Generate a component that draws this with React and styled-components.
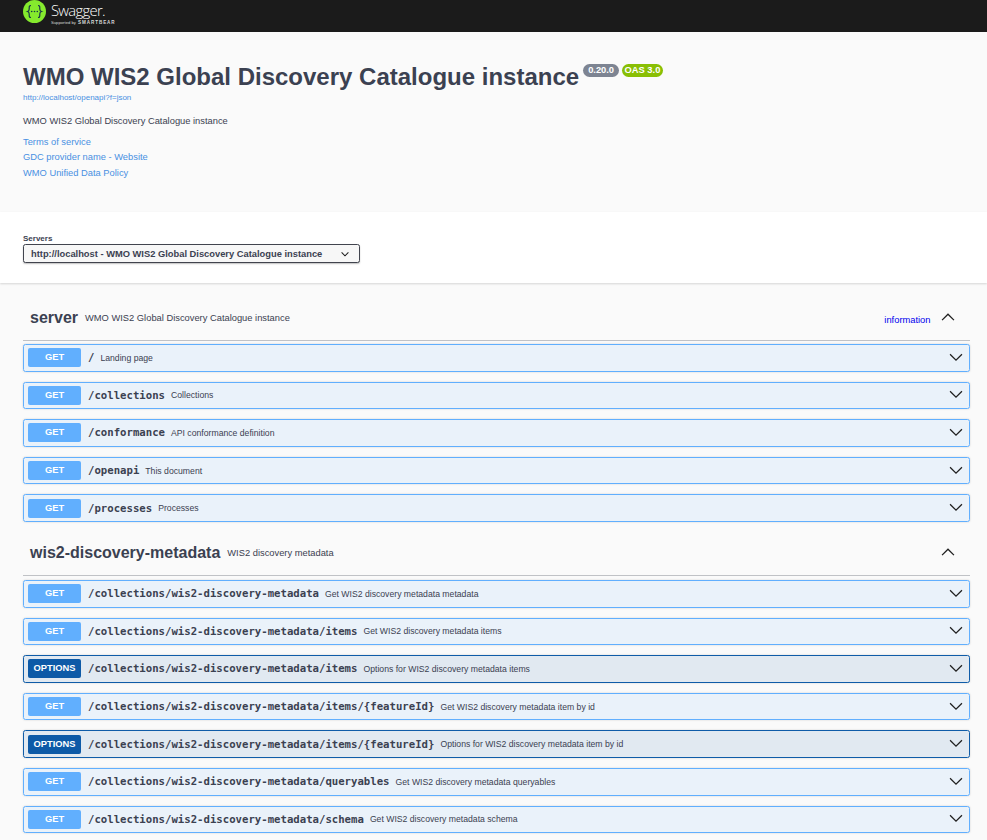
import React from 'react'
import styled, { createGlobalStyle } from 'styled-components'

const GlobalStyle = createGlobalStyle`
  html, body {
    margin: 0;
    padding: 0;
    background: #fafafa;
    font-family: "Liberation Sans", Arial, sans-serif;
    color: #3b4151;
  }
`

const Page = styled.div`
  width: 987px;
  height: 840px;
  overflow: hidden;
  background: #fafafa;
`

const Topbar = styled.div`
  height: 32px;
  background: #1b1b1b;
  padding-left: 23px;
  display: flex;
  align-items: flex-start;
  gap: 5px;
  svg {
    margin-top: -0.5px;
  }
`

const LogoText = styled.div`
  display: flex;
  flex-direction: column;
  color: #fff;
  margin-top: 2px;
`

const LogoName = styled.div`
  font-family: "Open Sans", sans-serif;
  font-size: 14.8px;
  line-height: 17px;
  letter-spacing: -0.7px;
  font-weight: 300;
`

const LogoSub = styled.div`
  font-size: 4.2px;
  line-height: 6px;
  margin-top: 1px;
  color: #d8d8d8;
  span {
    font-size: 4.6px;
    font-weight: 700;
    letter-spacing: 0.9px;
    margin-left: 1px;
  }
`

const Info = styled.div`
  height: 180px;
  padding: 29px 23px 0;
  box-sizing: border-box;
  background: #fafafa;
`

const TitleRow = styled.div`
  display: flex;
  align-items: flex-start;
`

const Title = styled.h1`
  margin: 0;
  font-size: 24px;
  line-height: 31px;
  font-weight: 700;
  color: #3b4151;
`

const Badge = styled.span`
  margin-left: ${p => p.$ml};
  margin-top: 3px;
  height: 13px;
  line-height: 13px;
  padding: 0 ${p => p.$pad};
  border-radius: 7px;
  background: ${p => p.$bg};
  color: #fff;
  font-size: 9.33px;
  font-weight: 700;
`

const SpecLink = styled.a`
  display: block;
  font-size: 8px;
  line-height: 10px;
  margin-top: 1px;
  color: #4990e2;
`

const Desc = styled.div`
  font-size: 9.33px;
  line-height: 12px;
  margin-top: 12px;
  color: #3b4151;
`

const InfoLink = styled.a`
  display: block;
  font-size: 9.33px;
  line-height: 12px;
  margin-top: ${p => p.$mt};
  color: #4990e2;
`

const Servers = styled.div`
  height: 71px;
  padding: 22px 23px 0;
  box-sizing: border-box;
  background: #fff;
  box-shadow: 0 1px 2px rgba(0, 0, 0, 0.15);
  position: relative;
`

const ServersLabel = styled.div`
  font-size: 8px;
  line-height: 9px;
  font-weight: 700;
  color: #3b4151;
  margin-bottom: 1px;
`

const ServerSelect = styled.div`
  width: 337px;
  height: 19px;
  box-sizing: border-box;
  border: 1px solid #41444e;
  border-radius: 2.5px;
  box-shadow: 0 1px 1.5px rgba(0, 0, 0, 0.25);
  padding: 0 10px 0 7px;
  display: flex;
  align-items: center;
  justify-content: space-between;
  font-size: 9.33px;
  font-weight: 700;
  color: #3b4151;
  background: #f7f7f7;
`

const Content = styled.div`
  padding: 0 17px 0 23px;
`

const SectionHead = styled.div`
  display: flex;
  align-items: center;
  border-bottom: 1px solid rgba(59, 65, 81, 0.3);
  height: ${p => p.$h};
  margin-top: ${p => p.$mt};
  margin-bottom: ${p => p.$mb};
  padding: 0 15.5px ${p => p.$pb} 7px;
  box-sizing: border-box;
  svg {
    margin-top: -2px;
  }
`

const SectionName = styled.span`
  font-size: 16px;
  font-weight: 700;
  color: #3b4151;
  margin-right: 7px;
`

const SectionDesc = styled.span`
  font-size: 9.33px;
  color: #3b4151;
  flex: 1;
`

const InfoTag = styled.span`
  font-size: 9.33px;
  color: #0000ee;
  margin-right: 10px;
  margin-top: 5px;
`

const Row = styled.div`
  height: 27.6px;
  box-sizing: border-box;
  margin-bottom: 10px;
  border: 1px solid ${p => p.$options ? '#0f5ca8' : '#61affe'};
  background: ${p => p.$options ? 'rgba(13, 90, 167, 0.1)' : 'rgba(97, 175, 254, 0.1)'};
  border-radius: 2.5px;
  box-shadow: 0 0 2px rgba(0, 0, 0, 0.19);
  display: flex;
  align-items: center;
  padding: 0 6px 0 4px;
  svg {
    margin-top: -2px;
  }
`

const Method = styled.span`
  width: 53px;
  height: 19px;
  flex: none;
  border-radius: 2px;
  background: ${p => p.$options ? '#0d5aa7' : '#61affe'};
  color: #fff;
  font-size: 9.33px;
  font-weight: 700;
  text-align: center;
  line-height: 18px;
`

const Path = styled.span`
  font-family: "DejaVu Sans Mono", monospace;
  font-size: 10.67px;
  font-weight: 700;
  color: #3b4151;
  margin-left: 7px;
  white-space: nowrap;
`

const Summary = styled.span`
  font-size: 8.67px;
  color: #3b4151;
  margin-left: 6px;
  flex: 1;
  white-space: nowrap;
`

const Chevron = ({ up, size = 14, w = 1.8 }) => (
  <svg width={size} height={size} viewBox="0 0 20 20" style={{ flex: 'none' }}>
    <path
      d={up ? 'M1.5 14.5 L10 6 L18.5 14.5' : 'M1.5 6 L10 14.5 L18.5 6'}
      fill="none"
      stroke="#1f1f1f"
      strokeWidth={w}
    />
  </svg>
)

const Logo = () => (
  <svg width="23" height="23" viewBox="0 0 23 23">
    <circle cx="11.5" cy="11.5" r="11.5" fill="#85ea2d" />
    <path
      d="M8 5.5 C6 5.5 6.2 7 6.2 9 C6.2 10.6 5.6 11.2 4.6 11.5 C5.6 11.8 6.2 12.4 6.2 14 C6.2 16 6 17.5 8 17.5 M15 5.5 C17 5.5 16.8 7 16.8 9 C16.8 10.6 17.4 11.2 18.4 11.5 C17.4 11.8 16.8 12.4 16.8 14 C16.8 16 17 17.5 15 17.5"
      fill="none"
      stroke="#173647"
      strokeWidth="1.2"
    />
    <circle cx="8.7" cy="11.5" r="0.8" fill="#173647" />
    <circle cx="11.5" cy="11.5" r="0.8" fill="#173647" />
    <circle cx="14.3" cy="11.5" r="0.8" fill="#173647" />
  </svg>
)

const serverRows = [
  ['/', 'Landing page'],
  ['/collections', 'Collections'],
  ['/conformance', 'API conformance definition'],
  ['/openapi', 'This document'],
  ['/processes', 'Processes'],
]

const metaRows = [
  ['GET', '/collections/wis2-discovery-metadata', 'Get WIS2 discovery metadata metadata'],
  ['GET', '/collections/wis2-discovery-metadata/items', 'Get WIS2 discovery metadata items'],
  ['OPTIONS', '/collections/wis2-discovery-metadata/items', 'Options for WIS2 discovery metadata items'],
  ['GET', '/collections/wis2-discovery-metadata/items/{featureId}', 'Get WIS2 discovery metadata item by id'],
  ['OPTIONS', '/collections/wis2-discovery-metadata/items/{featureId}', 'Options for WIS2 discovery metadata item by id'],
  ['GET', '/collections/wis2-discovery-metadata/queryables', 'Get WIS2 discovery metadata queryables'],
  ['GET', '/collections/wis2-discovery-metadata/schema', 'Get WIS2 discovery metadata schema'],
]

const Op = ({ method, path, summary }) => {
  const options = method === 'OPTIONS'
  return (
    <Row $options={options}>
      <Method $options={options}>{method}</Method>
      <Path>{path}</Path>
      <Summary>{summary}</Summary>
      <Chevron />
    </Row>
  )
}

export default function App() {
  return (
    <Page>
      <GlobalStyle />
      <Topbar>
        <Logo />
        <LogoText>
          <LogoName>Swagger.</LogoName>
          <LogoSub>Supported by <span>SMARTBEAR</span></LogoSub>
        </LogoText>
      </Topbar>
      <Info>
        <TitleRow>
          <Title>WMO WIS2 Global Discovery Catalogue instance</Title>
          <Badge $ml="4px" $pad="5px" $bg="#7d8492">0.20.0</Badge>
          <Badge $ml="3px" $pad="2.5px" $bg="#89bf04">OAS 3.0</Badge>
        </TitleRow>
        <SpecLink>http://localhost/openapi?f=json</SpecLink>
        <Desc>WMO WIS2 Global Discovery Catalogue instance</Desc>
        <InfoLink $mt="9px">Terms of service</InfoLink>
        <InfoLink $mt="3.4px">GDC provider name - Website</InfoLink>
        <InfoLink $mt="3.8px">WMO Unified Data Policy</InfoLink>
      </Info>
      <Servers>
        <ServersLabel>Servers</ServersLabel>
        <ServerSelect>
          <span>http://localhost - WMO WIS2 Global Discovery Catalogue instance</span>
          <Chevron size={8} w={2.6} />
        </ServerSelect>
      </Servers>
      <Content>
        <SectionHead $h="42px" $mt="16px" $mb="3px" $pb="4px">
          <SectionName>server</SectionName>
          <SectionDesc>WMO WIS2 Global Discovery Catalogue instance</SectionDesc>
          <InfoTag>information</InfoTag>
          <Chevron up />
        </SectionHead>
        {serverRows.map(r => <Op key={r[0]} method="GET" path={r[0]} summary={r[1]} />)}
        <SectionHead $h="43px" $mt="11px" $mb="4px" $pb="2px">
          <SectionName>wis2-discovery-metadata</SectionName>
          <SectionDesc>WIS2 discovery metadata</SectionDesc>
          <Chevron up />
        </SectionHead>
        {metaRows.map((r, i) => <Op key={i} method={r[0]} path={r[1]} summary={r[2]} />)}
      </Content>
    </Page>
  )
}
